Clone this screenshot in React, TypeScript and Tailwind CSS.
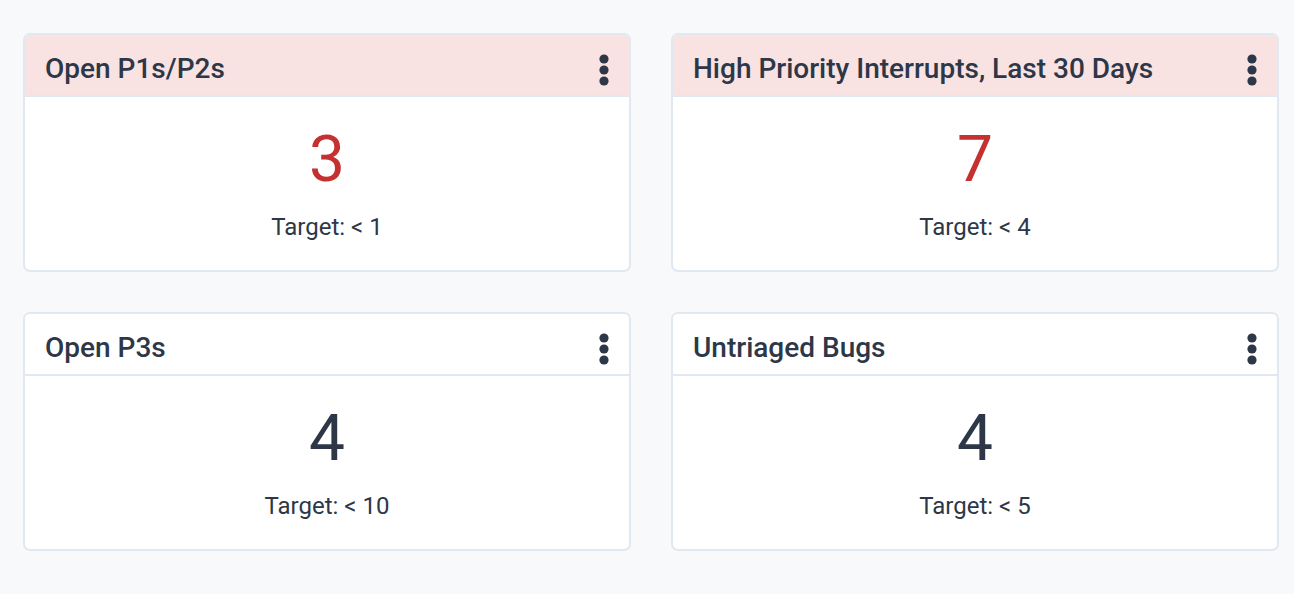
import React from 'react';

type Metric = {
  title: string;
  value: number;
  target: string;
  alert: boolean;
};

const metrics: Metric[] = [
  { title: 'Open P1s/P2s', value: 3, target: 'Target: < 1', alert: true },
  { title: 'High Priority Interrupts, Last 30 Days', value: 7, target: 'Target: < 4', alert: true },
  { title: 'Open P3s', value: 4, target: 'Target: < 10', alert: false },
  { title: 'Untriaged Bugs', value: 4, target: 'Target: < 5', alert: false },
];

function MoreIcon() {
  return (
    <svg width="10" height="32" viewBox="0 0 10 32" className="text-[#2d3748] mt-[2px]">
      <circle cx="5" cy="5" r="4.6" fill="currentColor" />
      <circle cx="5" cy="16" r="4.6" fill="currentColor" />
      <circle cx="5" cy="27" r="4.6" fill="currentColor" />
    </svg>
  );
}

function MetricCard({ metric }: { metric: Metric }) {
  return (
    <div className="w-[608px] bg-white border-2 border-[#e2e8f0] rounded-[7px] overflow-hidden">
      <div
        className={`
          h-[62px] px-[20px] pt-[8px]
          flex items-center justify-between
          border-b-2 border-[#e2e8f0]
          ${metric.alert ? 'bg-[#f9e2e2]' : 'bg-white'}
        `}
      >
        <h2 className="text-[28px] leading-[32px] font-medium text-[#2d3748]">{metric.title}</h2>
        <MoreIcon />
      </div>
      <div className="pt-[31px] pb-[27px] flex flex-col items-center">
        <div
          className={`text-[64px] leading-[64px] font-normal ${
            metric.alert ? 'text-[#c53030]' : 'text-[#2d3748]'
          }`}
        >
          {metric.value}
        </div>
        <div className="mt-[19px] text-[24px] leading-[32px] text-[#2d3748]">{metric.target}</div>
      </div>
    </div>
  );
}

export default function App() {
  return (
    <div
      className="w-[1294px] h-[594px] bg-[#f7f9fb] pl-[23px] pt-[33px]"
      style={{ fontFamily: 'Roboto, "Liberation Sans", sans-serif' }}
    >
      <div className="grid grid-cols-[608px_608px] gap-x-[40px] gap-y-[40px]">
        {metrics.map((m) => (
          <MetricCard key={m.title} metric={m} />
        ))}
      </div>
    </div>
  );
}
